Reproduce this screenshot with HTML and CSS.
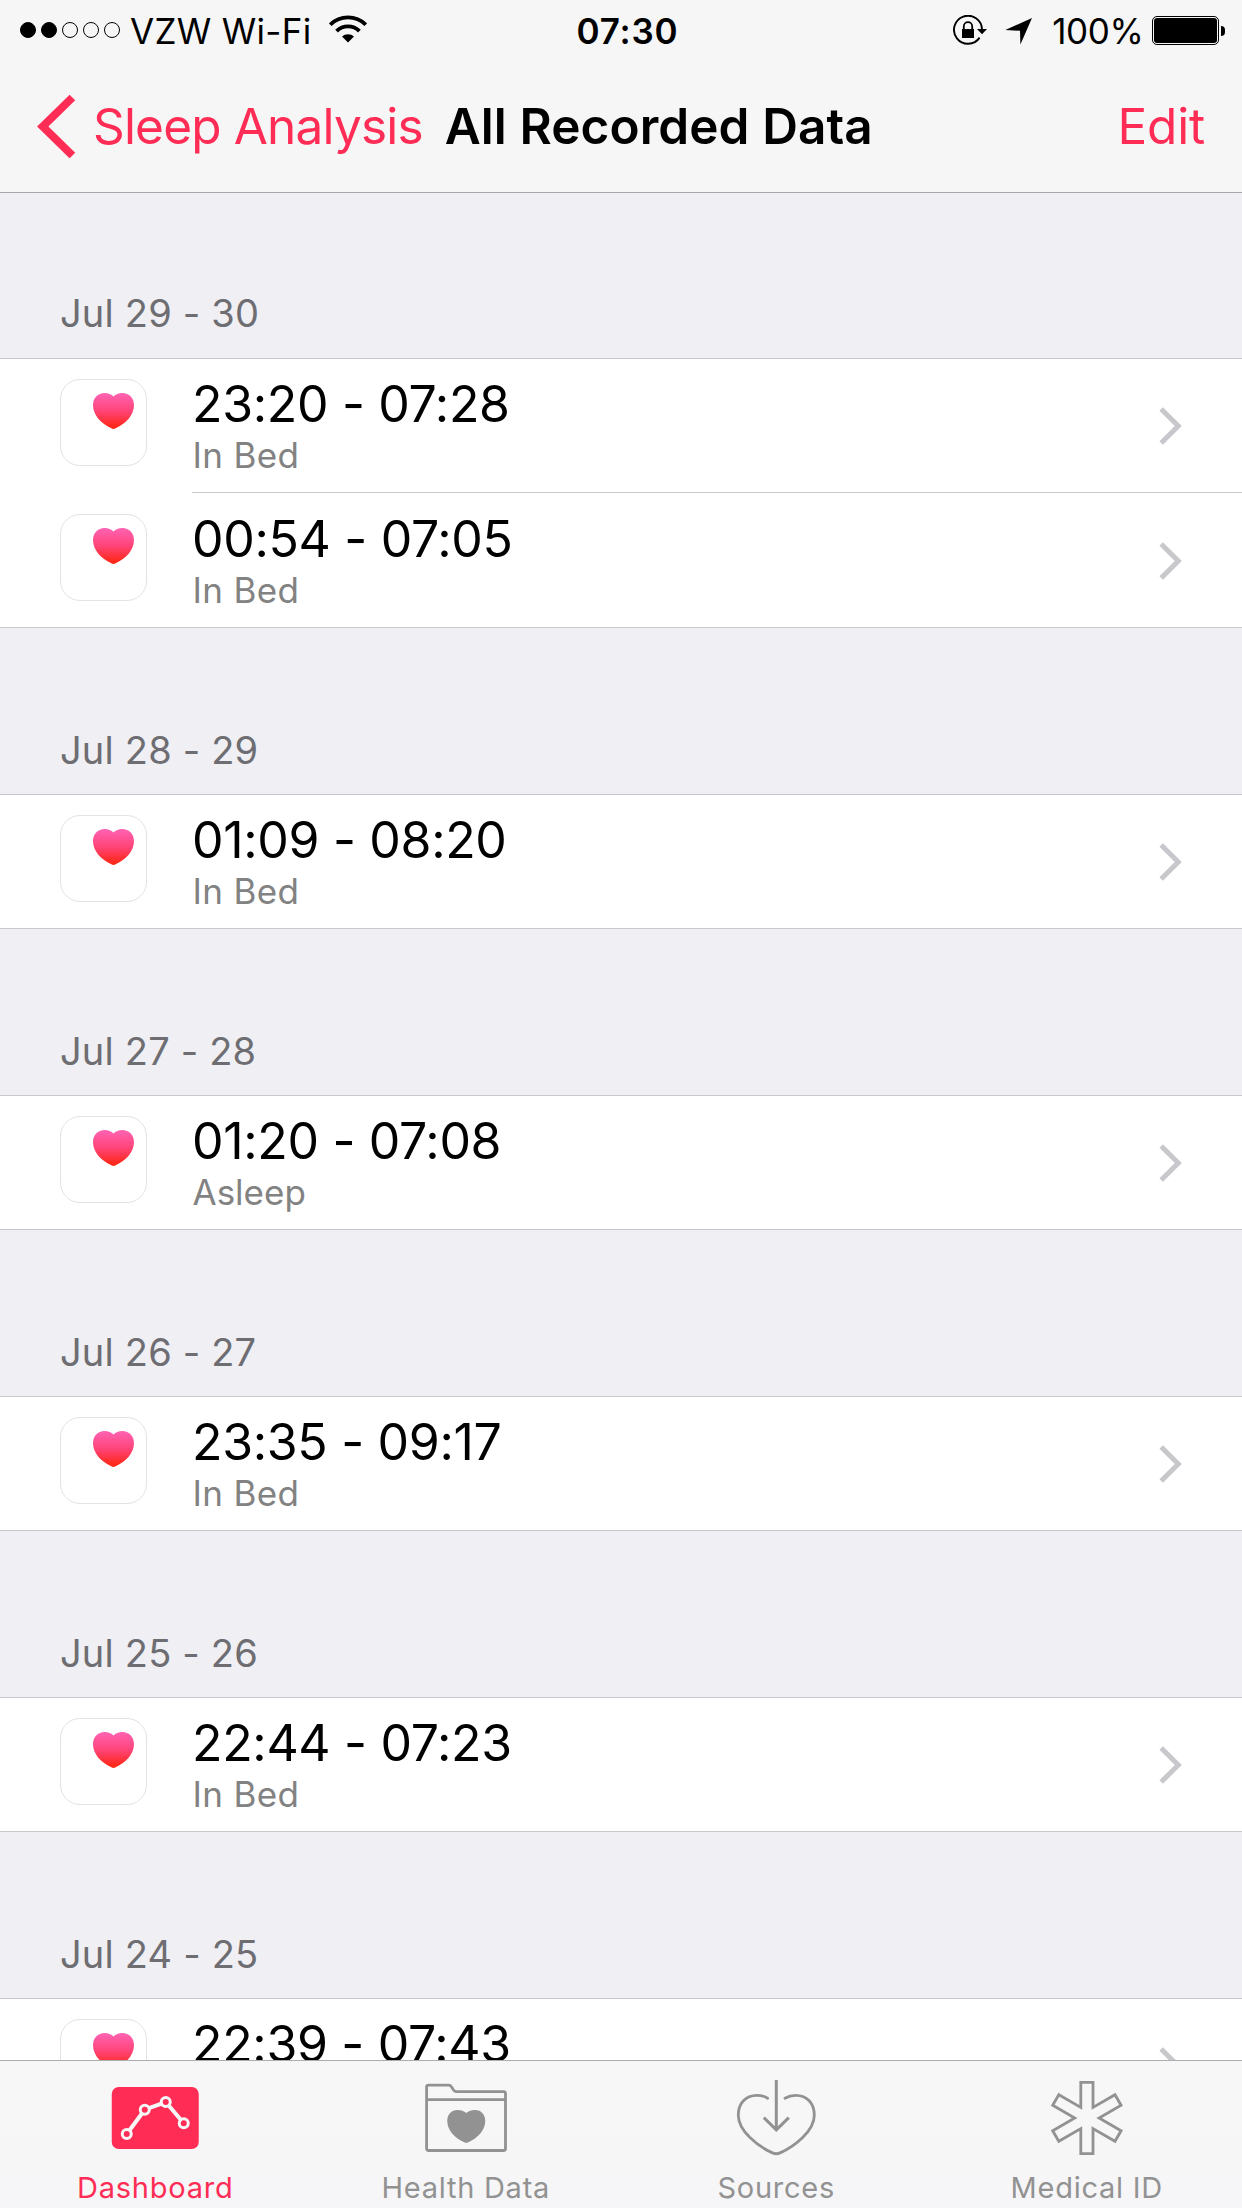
FILE: index.html
```
<!DOCTYPE html>
<html lang="en">
<head>
<meta charset="utf-8">
<title>All Recorded Data</title>
<link rel="stylesheet" href="styles.css">
</head>
<body>
<svg class="defs" width="0" height="0" aria-hidden="true">
  <defs>
    <linearGradient id="heart-fill" x1="0" y1="0" x2="0" y2="1">
      <stop offset="0" stop-color="#ff63b4"/>
      <stop offset="0.5" stop-color="#ff4478"/>
      <stop offset="0.9" stop-color="#ff2a20"/>
      <stop offset="1" stop-color="#ff2818"/>
    </linearGradient>
    <symbol id="heart" viewBox="0 0 85 85">
      <path fill="url(#heart-fill)" d="M52.5 16.6C50.3 14.3 47.3 13 43.8 13C36.6 13 32 18 32 25.3C32 35 40 43.6 50.3 48.3Q52.5 49.6 54.7 48.3C65 43.6 73 35 73 25.3C73 18 68.4 13 61.2 13C57.7 13 54.7 14.3 52.5 16.6Z"/>
    </symbol>
    <symbol id="chevron" viewBox="0 0 24 40">
      <path d="M3.2 3L20.3 20L3.2 37" fill="none" stroke="#c7c7cc" stroke-width="5"/>
    </symbol>
  </defs>
</svg>
<div class="screen">
  <header class="header">
    <div class="status">
      <div class="signal"><i class="dot on"></i><i class="dot on"></i><i class="dot"></i><i class="dot"></i><i class="dot"></i></div>
      <span class="carrier">VZW Wi-Fi</span>
      <svg class="wifi" width="38" height="28" viewBox="0 0 38 28">
        <path d="M1.2 9.7A25.2 25.2 0 0 1 36.8 9.7M7.6 16.1A16.1 16.1 0 0 1 30.4 16.1" fill="none" stroke="#000" stroke-width="3.9"/>
        <path d="M13 21.5A8.8 8.8 0 0 1 25 21.5L19 27.5Z"/>
      </svg>
      <span class="clock">07:30</span>
      <div class="status-right">
        <svg class="lock" width="34" height="30" viewBox="0 0 34 30">
          <path d="M29 14.5A14 14 0 1 0 26.6 22.6" fill="none" stroke="#000" stroke-width="1.9"/>
          <path d="M24 14H34L29 19.3ZM9 14H21V23H9Z"/>
          <path d="M10.8 14.5V11.3A4.2 4.2 0 0 1 19.2 11.3V14.5" fill="none" stroke="#000" stroke-width="1.8"/>
        </svg>
        <svg class="location" width="27" height="27" viewBox="0 0 27 27"><path d="M27 0L15.4 26.5L15 12.8L.3 12Z"/></svg>
        <span class="percent">100%</span>
        <div class="battery"><i class="battery-level"></i></div>
        <i class="battery-tip"></i>
      </div>
    </div>
    <nav class="nav">
      <svg class="back-icon" width="40" height="64" viewBox="0 0 40 64"><path d="M36.4 3.5L6.8 32.5L36.4 61.5" fill="none" stroke="#ff2d55" stroke-width="8"/></svg>
      <span class="back">Sleep Analysis</span>
      <h1 class="title">All Recorded Data</h1>
      <span class="edit">Edit</span>
    </nav>
  </header>

  <main class="content">
    <h2 class="section-title">Jul 29 - 30</h2>
    <div class="group">
      <div class="row">
        <svg class="app" viewBox="0 0 85 85"><use href="#heart"/></svg>
        <div class="cell"><div class="text"><div class="time">23:20 - 07:28</div><div class="kind">In Bed</div></div><svg class="chevron"><use href="#chevron"/></svg></div>
      </div>
      <div class="row">
        <svg class="app" viewBox="0 0 85 85"><use href="#heart"/></svg>
        <div class="cell"><div class="text"><div class="time">00:54 - 07:05</div><div class="kind">In Bed</div></div><svg class="chevron"><use href="#chevron"/></svg></div>
      </div>
    </div>
    <h2 class="section-title">Jul 28 - 29</h2>
    <div class="group">
      <div class="row">
        <svg class="app" viewBox="0 0 85 85"><use href="#heart"/></svg>
        <div class="cell"><div class="text"><div class="time">01:09 - 08:20</div><div class="kind">In Bed</div></div><svg class="chevron"><use href="#chevron"/></svg></div>
      </div>
    </div>
    <h2 class="section-title">Jul 27 - 28</h2>
    <div class="group">
      <div class="row">
        <svg class="app" viewBox="0 0 85 85"><use href="#heart"/></svg>
        <div class="cell"><div class="text"><div class="time">01:20 - 07:08</div><div class="kind asleep">Asleep</div></div><svg class="chevron"><use href="#chevron"/></svg></div>
      </div>
    </div>
    <h2 class="section-title">Jul 26 - 27</h2>
    <div class="group">
      <div class="row">
        <svg class="app" viewBox="0 0 85 85"><use href="#heart"/></svg>
        <div class="cell"><div class="text"><div class="time">23:35 - 09:17</div><div class="kind">In Bed</div></div><svg class="chevron"><use href="#chevron"/></svg></div>
      </div>
    </div>
    <h2 class="section-title">Jul 25 - 26</h2>
    <div class="group">
      <div class="row">
        <svg class="app" viewBox="0 0 85 85"><use href="#heart"/></svg>
        <div class="cell"><div class="text"><div class="time">22:44 - 07:23</div><div class="kind">In Bed</div></div><svg class="chevron"><use href="#chevron"/></svg></div>
      </div>
    </div>
    <h2 class="section-title">Jul 24 - 25</h2>
    <div class="group">
      <div class="row">
        <svg class="app" viewBox="0 0 85 85"><use href="#heart"/></svg>
        <div class="cell"><div class="text"><div class="time">22:39 - 07:43</div></div><svg class="chevron"><use href="#chevron"/></svg></div>
      </div>
    </div>
  </main>

  <footer class="tabs">
    <div class="tab active">
      <svg class="tab-icon" viewBox="0 0 96 96">
        <rect x="4.75" y="16" width="87" height="62" rx="7" fill="#ff2d55"/>
        <g stroke="#f7f7f7" fill="none"><path d="M19.75 63L37.75 38.7L58.75 31L76.75 52.3" stroke-width="4"/>
        <g fill="#ff2d55" stroke-width="3"><circle cx="19.75" cy="63" r="4.5"/><circle cx="37.75" cy="38.7" r="4.5"/><circle cx="58.75" cy="31" r="4.5"/><circle cx="76.75" cy="52.3" r="4.5"/></g></g>
      </svg>
      <span class="tab-label">Dashboard</span>
    </div>
    <div class="tab">
      <svg class="tab-icon" viewBox="0 0 96 96">
        <path d="M8.6 28.6V16Q8.6 14.2 10.5 14.2H30.5Q32.4 14.2 33.4 15.7L35.5 19Q36.7 20.7 38.6 20.7H85.5Q87.5 20.7 87.5 22.7V77.5Q87.5 79.5 85.5 79.5H10.6Q8.6 79.5 8.6 77.5V28.6H87.5" fill="none" stroke="#929292" stroke-width="2.8"/>
        <path d="M48.25 42C46 40 43 39 39.8 39C33 39 29.25 43.7 29.25 50C29.25 59 36.5 67 46.2 71.2Q48.25 72.4 50.3 71.2C60 67 67.25 59 67.25 50C67.25 43.7 63.5 39 56.7 39C53.5 39 50.5 40 48.25 42Z" fill="#929292"/>
      </svg>
      <span class="tab-label">Health Data</span>
    </div>
    <div class="tab">
      <svg class="tab-icon" viewBox="0 0 96 96" fill="none" stroke="#929292" stroke-width="2.8">
        <path d="M39.6 27.2C36.5 25.3 33 24.3 29 24.3C17 24.3 10.3 32.8 10.3 44.2C10.3 60 30 75.5 44.5 81.9Q48.3 83.6 52.1 81.9C66.6 75.5 86.3 60 86.3 44.2C86.3 32.8 79.6 24.3 67.6 24.3C63.6 24.3 60.1 25.3 57 27.2" stroke-linecap="round"/>
        <path d="M48.3 9V58.5M35.8 46.6L48.3 58.8L60.8 46.6" stroke-width="3"/>
      </svg>
      <span class="tab-label">Sources</span>
    </div>
    <div class="tab">
      <svg class="tab-icon" viewBox="0 0 96 96">
        <path transform="translate(47.9 47)" d="M-6.1-35.6H6.1V-10.6L28.1-23.3L34.2-12.7L12.2 0L34.2 12.7L28.1 23.3L6.1 10.6V35.6H-6.1V10.6L-28.1 23.3L-34.2 12.7L-12.2 0L-34.2-12.7L-28.1-23.3L-6.1-10.6Z" fill="none" stroke="#929292" stroke-width="2.8"/>
      </svg>
      <span class="tab-label">Medical ID</span>
    </div>
  </footer>
</div>
</body>
</html>
```
FILE: styles.css
```
* { box-sizing: border-box; }
body { margin: 0; font-family: Inter, "Liberation Sans", sans-serif; color: #000; }
h1, h2 { margin: 0; }
svg { display: block; flex: none; }
.defs { position: absolute; }

.screen {
  display: flex;
  flex-direction: column;
  width: 1242px;
  height: 2208px;
  overflow: hidden;
  background: #efeff4;
}

/* Status bar */
.header { flex: none; height: 193px; background: #f6f6f6; border-bottom: 1px solid #a7a7ab; }
.status {
  display: flex;
  align-items: center;
  height: 62px;
  padding: 0 17px 0 20px;
  font-size: 35px;
  line-height: 62px;
  white-space: nowrap;
}
.signal { display: flex; gap: 5px; margin-bottom: 2px; }
.dot { width: 16px; height: 16px; border: 1px solid #000; border-radius: 50%; }
.dot.on { background: #000; }
.carrier { margin-left: 10px; letter-spacing: 0.31px; }
.wifi { margin: 0 0 4px 18px; }
.clock { margin-left: 209px; font-weight: 600; letter-spacing: 0.8px; }
.status-right { display: flex; align-items: center; margin-left: auto; }
.lock { margin: 0 18px 2px 0; }
.location { margin-right: 20px; }
.percent { letter-spacing: -0.4px; margin-right: 8.6px; }
.battery {
  width: 67px;
  height: 29px;
  padding: 1px;
  border: 1px solid #000;
  border-radius: 5px;
  margin-bottom: 1px;
}
.battery-level { display: block; height: 25px; border-radius: 3px; background: #000; }
.battery-tip { width: 4px; height: 10px; margin-left: 2px; border-radius: 0 4px 4px 0; background: #000; }

/* Navigation bar */
.nav {
  display: flex;
  align-items: center;
  height: 128px;
  padding: 0 37px 0 36px;
  font-size: 49.5px;
  line-height: 128px;
  white-space: nowrap;
}
.back { margin-left: 17px; letter-spacing: -0.82px; color: #ff2d55; }
.title { margin-left: 22px; font-size: 49.5px; font-weight: 600; letter-spacing: 0.08px; }
.edit { margin-left: auto; letter-spacing: -0.2px; color: #ff2d55; }

/* Recorded entries */
.content { flex: 1; min-height: 0; overflow: hidden; }
.section-title {
  height: 166px;
  padding: 99px 0 21px 60px;
  font-size: 38px;
  font-weight: 400;
  line-height: 46px;
  letter-spacing: 0.18px;
  color: #6d6d72;
}
.section-title:first-child { height: 165px; padding-top: 97px; }
.group { background: #fff; border: solid #c8c7cc; border-width: 1px 0; }
.row { display: flex; padding-left: 60px; }
.row + .row { padding-top: 1px; }
.app {
  width: 87px;
  height: 87px;
  margin-top: 20px;
  border: 1px solid #e3e3e5;
  border-radius: 20px;
}
.cell {
  display: flex;
  flex: 1;
  justify-content: space-between;
  align-items: center;
  height: 134px;
  margin-left: 45px;
  padding: 0 60px 0 0;
  border-bottom: 1px solid #c8c7cc;
}
.row:last-child .cell { height: 133px; border-bottom: 0; }
.text { height: 103px; }
.time { font-size: 50px; line-height: 60px; letter-spacing: -0.33px; }
.kind { margin-left: 0.5px; font-size: 35px; line-height: 42px; letter-spacing: 0.35px; color: #828282; }
.kind.asleep { letter-spacing: 0; }
.chevron { width: 24px; height: 40px; }

/* Tab bar */
.tabs {
  display: grid;
  grid-template-columns: repeat(4, 1fr);
  flex: none;
  height: 148px;
  border-top: 1px solid #adadaf;
  background: linear-gradient(#f7f7f7, #f6f6f8);
  color: #929292;
}
.tab { display: flex; flex-direction: column; align-items: center; padding-top: 10px; }
.tab-icon { width: 96px; height: 96px; }
.tab-label { margin-top: 4px; font-size: 29px; line-height: 34px; letter-spacing: 0.75px; }
.tab.active { color: #ff2d55; }
```
